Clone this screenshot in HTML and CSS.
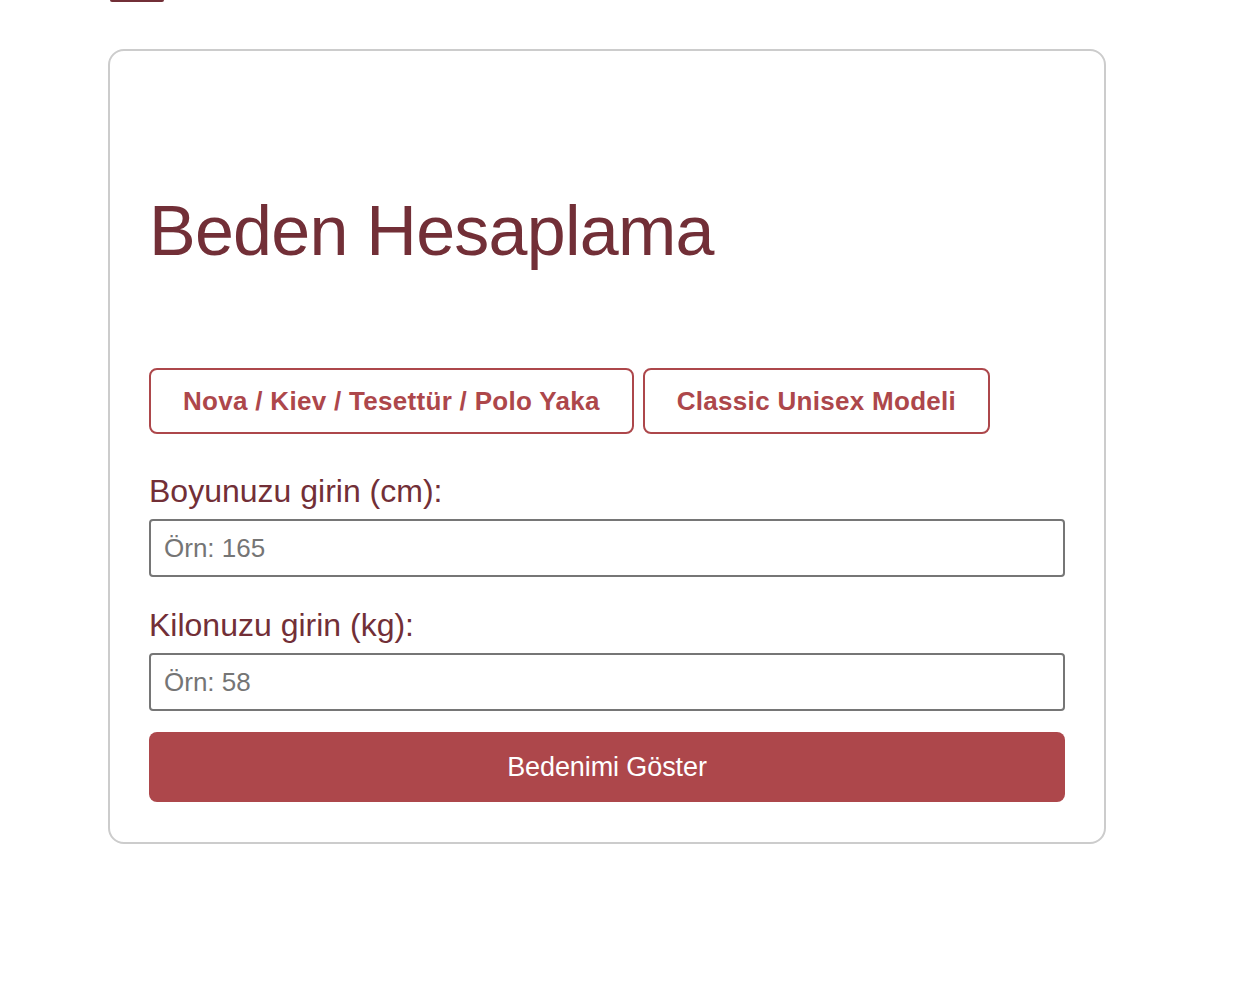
FILE: index.html
```html
<!DOCTYPE html>
<html lang="tr">
<head>
    <meta charset="UTF-8">
    <meta name="viewport" content="width=device-width, initial-scale=1.0">
    <title>Beden Hesaplama</title>
    <link rel="stylesheet" href="styles.css">
</head>
<body>
    <div id="sayfa">
        <div id="ust-sekme"></div>

        <div id="hesaplayici">
            <h1 id="baslik">Beden Hesaplama</h1>

            <div id="modeller">
                <button class="model-btn">Nova / Kiev / Tesettür / Polo Yaka</button>
                <button class="model-btn">Classic Unisex Modeli</button>
            </div>

            <div class="alan">
                <label class="etiket" for="boy">Boyunuzu girin (cm):</label>
                <input class="giris" type="number" id="boy" placeholder="Örn: 165">
            </div>

            <div class="alan son">
                <label class="etiket" for="kilo">Kilonuzu girin (kg):</label>
                <input class="giris" type="number" id="kilo" placeholder="Örn: 58">
            </div>

            <button id="goster">Bedenimi Göster</button>
        </div>
    </div>
</body>
</html>
```

FILE: styles.css
```css
body{
    margin: 0;
    font-family: "Liberation Sans", Arial, sans-serif;
    background: #fff;
}

#sayfa{
    width: 998px;
    margin-left: 108px;
}

#ust-sekme{
    width: 54px;
    height: 2px;
    margin-left: 2px;
    background: #722f37;
    border-radius: 0 0 4px 4px;
}

#hesaplayici{
    box-sizing: border-box;
    margin-top: 47px;
    width: 998px;
    padding: 40px 39px;
    border: 2px solid #cccccc;
    border-radius: 16px;
}

#baslik{
    margin: 100px 0 97px;
    font-size: 70px;
    font-weight: normal;
    letter-spacing: -0.75px;
    color: #722f37;
}

#modeller{
    display: flex;
    gap: 9px;
    margin-bottom: 39px;
}

.model-btn{
    padding: 16px 32px;
    border: 2px solid #ad474b;
    border-radius: 8px;
    background: #fff;
    color: #ad474b;
    font-family: "Liberation Sans", Arial, sans-serif;
    font-size: 26px;
    font-weight: bold;
    letter-spacing: 0.3px;
    line-height: 30px;
    cursor: pointer;
}

.alan{
    margin-bottom: 30px;
}

.alan.son{
    margin-bottom: 21px;
}

.etiket{
    display: block;
    margin-bottom: 9px;
    font-size: 32px;
    color: #722f37;
}

.giris{
    box-sizing: border-box;
    display: block;
    width: 100%;
    height: 58px;
    padding: 12px 13px;
    border: 2px solid #767676;
    border-radius: 4px;
    font-family: "Liberation Sans", Arial, sans-serif;
    font-size: 26px;
    color: #333;
}

.giris::placeholder{
    color: #757575;
}

#goster{
    display: block;
    width: 100%;
    height: 70px;
    border: none;
    border-radius: 8px;
    background: #ad474b;
    color: #fff;
    font-family: "Liberation Sans", Arial, sans-serif;
    font-size: 27px;
    letter-spacing: -0.1px;
    cursor: pointer;
}
```
